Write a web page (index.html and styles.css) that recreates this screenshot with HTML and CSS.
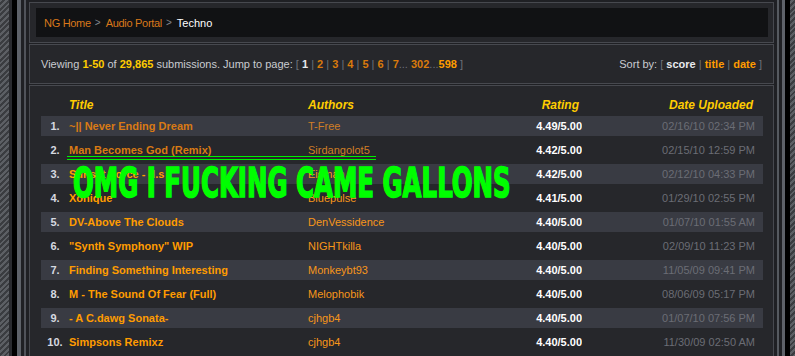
FILE: index.html
```html
<!DOCTYPE html>
<html lang="en">
<head>
    <meta charset="UTF-8">
    <title>Audio Portal - Techno</title>
    <link rel="stylesheet" href="styles.css">
</head>
<body>
    <div class="frame">
        <div class="panel crumbs">
            <div class="crumb-box">
                <a class="crumb" href="#">NG Home</a><span class="sep">&gt;</span><a class="crumb" href="#">Audio Portal</a><span class="sep">&gt;</span><span class="here">Techno</span>
            </div>
        </div>

        <div class="panel info">
            <div class="viewing">
                Viewing <b class="hl">1-50</b> of <b class="hl">29,865</b> submissions. Jump to page:
                <span class="dim">[</span> <b class="cur">1</b> <span class="dim">|</span>
                <a class="pg" href="#">2</a> <span class="dim">|</span>
                <a class="pg" href="#">3</a> <span class="dim">|</span>
                <a class="pg" href="#">4</a> <span class="dim">|</span>
                <a class="pg" href="#">5</a> <span class="dim">|</span>
                <a class="pg" href="#">6</a> <span class="dim">|</span>
                <a class="pg" href="#">7</a><span class="dim">...</span>
                <a class="pg" href="#">302</a><span class="dim">...</span><a class="pg last" href="#">598</a>
                <span class="dim">]</span>
            </div>
            <div class="sort">
                Sort by: <span class="dim">[</span> <b class="cur">score</b> <span class="dim">|</span>
                <a class="pg last" href="#">title</a> <span class="dim">|</span>
                <a class="pg last" href="#">date</a> <span class="dim">]</span>
            </div>
        </div>

        <div class="panel list">
            <table class="subs">
                <colgroup>
                    <col class="c-num"><col class="c-title"><col class="c-author"><col class="c-rating"><col>
                </colgroup>
                <thead>
                    <tr>
                        <th></th>
                        <th>Title</th>
                        <th>Authors</th>
                        <th class="r">Rating</th>
                        <th class="r d">Date Uploaded</th>
                    </tr>
                </thead>
                <tbody>
                    <tr class="alt visited">
                        <td class="num">1.</td><td class="title"><a href="#">~|| Never Ending Dream</a></td>
                        <td class="author"><a href="#">T-Free</a></td><td class="rating">4.49/5.00</td><td class="date">02/16/10 02:34 PM</td>
                    </tr>
                    <tr class="visited">
                        <td class="num">2.</td><td class="title"><a href="#">Man Becomes God (Remix)</a></td>
                        <td class="author"><a href="#">Sirdangolot5</a></td><td class="rating">4.42/5.00</td><td class="date">02/15/10 12:59 PM</td>
                    </tr>
                    <tr class="alt">
                        <td class="num">3.</td><td class="title"><a href="#">Sunset Force - d.s</a></td>
                        <td class="author"><a href="#">Eisman</a></td><td class="rating">4.42/5.00</td><td class="date">02/12/10 04:33 PM</td>
                    </tr>
                    <tr>
                        <td class="num">4.</td><td class="title"><a href="#">Xonique</a></td>
                        <td class="author"><a href="#">Bluepulse</a></td><td class="rating">4.41/5.00</td><td class="date">01/29/10 02:55 PM</td>
                    </tr>
                    <tr class="alt">
                        <td class="num">5.</td><td class="title"><a href="#">DV-Above The Clouds</a></td>
                        <td class="author"><a href="#">DenVessidence</a></td><td class="rating">4.40/5.00</td><td class="date">01/07/10 01:55 AM</td>
                    </tr>
                    <tr>
                        <td class="num">6.</td><td class="title"><a href="#">"Synth Symphony" WIP</a></td>
                        <td class="author"><a href="#">NIGHTkilla</a></td><td class="rating">4.40/5.00</td><td class="date">02/09/10 11:23 PM</td>
                    </tr>
                    <tr class="alt">
                        <td class="num">7.</td><td class="title"><a href="#">Finding Something Interesting</a></td>
                        <td class="author"><a href="#">Monkeybt93</a></td><td class="rating">4.40/5.00</td><td class="date">11/05/09 09:41 PM</td>
                    </tr>
                    <tr>
                        <td class="num">8.</td><td class="title"><a href="#">M - The Sound Of Fear (Full)</a></td>
                        <td class="author"><a href="#">Melophobik</a></td><td class="rating">4.40/5.00</td><td class="date">08/06/09 05:17 PM</td>
                    </tr>
                    <tr class="alt">
                        <td class="num">9.</td><td class="title"><a href="#">- A C.dawg Sonata-</a></td>
                        <td class="author"><a href="#">cjhgb4</a></td><td class="rating">4.40/5.00</td><td class="date">01/07/10 07:56 PM</td>
                    </tr>
                    <tr>
                        <td class="num">10.</td><td class="title"><a href="#">Simpsons Remixz</a></td>
                        <td class="author"><a href="#">cjhgb4</a></td><td class="rating">4.40/5.00</td><td class="date">11/30/09 02:50 AM</td>
                    </tr>
                </tbody>
            </table>

            <!-- scribbled over the screenshot -->
            <div class="scribble"></div>
            <div class="shout"><span>OMG I FUCKING CAME GALLONS</span></div>
        </div>
    </div>
</body>
</html>
```

FILE: styles.css
```css
body {
    margin: 0;
    height: 100vh;
    overflow: hidden;
    font-family: "Liberation Sans", Arial, sans-serif;
    font-size: 11px;
    background: repeating-linear-gradient(-45deg, #5c5f64 0 2px, #3a3c40 2px 4px);
}
a {
    text-decoration: none;
}
.frame {
    height: 100%;
    overflow: hidden;
    margin: 0 5px 0 9px;
    padding: 2px 16px 0 20px;
    box-sizing: border-box;
    background:
        linear-gradient(to right, #2a2b2f 0 3px, #000 3px 8px, #5e6269 8px 12px, #1f2024 12px 15px, #50535a 15px 17px, #1f2024 17px 20px) left top / 20px 100% no-repeat,
        linear-gradient(to right, #1f2024 0 3px, #565a60 3px 5px, #1f2024 5px 8px, #5e6269 8px 11px, #000 11px 16px) right top / 16px 100% no-repeat,
        #1f2024;
}
.panel {
    border: 1px solid #47494f;
    background-color: #26272b;
}

/* breadcrumb */
.crumbs {
    padding: 5px 5px 5px 6px;
}
.crumb-box {
    height: 29px;
    display: flex;
    align-items: center;
    padding-left: 8px;
    background-color: #111214;
}
.crumb {
    color: #d9781a;
    letter-spacing: -0.3px;
}
.sep {
    color: #84878d;
    font-size: 10px;
    padding: 0 5px 0 4px;
}
.here {
    color: #ffffff;
}

/* paging bar */
.info {
    margin-top: 1px;
    height: 38px;
    display: flex;
    justify-content: space-between;
    align-items: center;
    padding: 0 11px;
    color: #c9cbd0;
}
.hl {
    color: #ffcc00;
}
.cur {
    color: #e8eaee;
}
.dim {
    color: #6e717a;
}
.pg {
    font-weight: bold;
    color: #d97a0c;
}
.pg.last {
    color: #ff9c00;
}

/* submissions */
.list {
    position: relative;
    margin-top: 1px;
    height: 268px;
    border-bottom: none;
    padding: 2px 10px 0 11px;
    overflow: hidden;
}
.subs {
    width: 100%;
    table-layout: fixed;
    border-collapse: separate;
    border-spacing: 0 4px;
}
.c-num { width: 28px; }
.c-title { width: 239px; }
.c-author { width: 142px; }
.c-rating { width: 132px; }
.subs th {
    height: 20px;
    padding: 0;
    text-align: left;
    color: #ffcc00;
    font-size: 12px;
    font-weight: bold;
    font-style: italic;
    vertical-align: bottom;
}
.subs th.r {
    text-align: right;
    padding-right: 3px;
}
.subs th.d {
    padding-right: 10px;
}
.subs td {
    height: 20px;
    padding: 0;
    white-space: nowrap;
    overflow: hidden;
}
.subs tr.alt td {
    background-color: #393b43;
}
.num {
    text-align: center;
    font-weight: bold;
    color: #d6d9e0;
}
.title a {
    font-weight: bold;
    color: #ff9c00;
}
.author a {
    color: #f7961a;
}
.visited .title a {
    color: #d97a14;
}
.visited .author a {
    color: #d07e26;
}
.rating {
    text-align: right;
    font-weight: bold;
    color: #ffffff;
}
.date {
    text-align: right;
    padding-right: 8px !important;
    color: #6b6d75;
}

/* green marker on top */
.scribble {
    position: absolute;
    left: 37px;
    top: 70px;
    width: 309px;
    height: 2px;
    border-top: 1px solid #00ee00;
    border-bottom: 1px solid #00ee00;
}
.shout {
    position: absolute;
    left: 43px;
    top: 77px;
    white-space: nowrap;
}
.shout span {
    display: inline-block;
    font-family: "DejaVu Sans Condensed", "DejaVu Sans", sans-serif;
    font-weight: bold;
    font-size: 40px;
    line-height: 40px;
    color: #00ff00;
    -webkit-text-stroke: 1.5px #00ff00;
    transform: scaleX(0.68);
    transform-origin: left top;
}
```
